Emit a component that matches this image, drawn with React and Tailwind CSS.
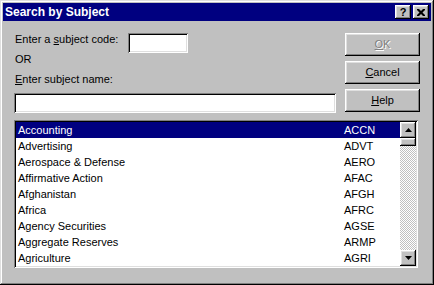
import React from 'react';

const subjects = [
    { name: 'Accounting', code: 'ACCN' },
    { name: 'Advertising', code: 'ADVT' },
    { name: 'Aerospace & Defense', code: 'AERO' },
    { name: 'Affirmative Action', code: 'AFAC' },
    { name: 'Afghanistan', code: 'AFGH' },
    { name: 'Africa', code: 'AFRC' },
    { name: 'Agency Securities', code: 'AGSE' },
    { name: 'Aggregate Reserves', code: 'ARMP' },
    { name: 'Agriculture', code: 'AGRI' },
];

const raised = 'shadow-[inset_-1px_-1px_#000,inset_1px_1px_#fff,inset_-2px_-2px_#808080,inset_2px_2px_#dfdfdf]';
const sunken = 'shadow-[inset_1px_1px_#808080,inset_-1px_-1px_#fff,inset_2px_2px_#000,inset_-2px_-2px_#dfdfdf]';

function Arrow({ down }) {
    return (
        <svg width="7" height="4" viewBox="0 0 7 4">
            {down
                ? <polygon points="0,0 7,0 3.5,4" fill="#000" />
                : <polygon points="3.5,0 7,4 0,4" fill="#000" />}
        </svg>
    );
}

function Button({ children, disabled }) {
    return (
        <div className={`h-[23px] w-[75px] bg-[#c0c0c0] ${raised} flex items-center justify-center text-[11px] leading-[13px] ${disabled ? 'text-[#808080] [text-shadow:1px_1px_0_#fff]' : 'text-black'}`}>
            {children}
        </div>
    );
}

export default function App() {
    return (
        <div className="w-[434px] h-[285px] bg-[#c0c0c0] p-[3px] shadow-[inset_-1px_-1px_#000,inset_1px_1px_#dfdfdf,inset_-2px_-2px_#808080,inset_2px_2px_#fff] font-['Liberation_Sans',Arial,sans-serif] select-none">
            {/* title bar */}
            <div className="h-[18px] bg-[#000080] flex items-center justify-between pl-[2px] pr-[2px]">
                <span className="text-white font-bold text-[12px] leading-[18px]">Search by Subject</span>
                <div className="flex gap-[2px]">
                    <div className={`w-[16px] h-[14px] bg-[#c0c0c0] ${raised} flex items-center justify-center text-[11px] font-bold leading-none text-black`}>?</div>
                    <div className={`w-[16px] h-[14px] bg-[#c0c0c0] ${raised} flex items-center justify-center`}>
                        <svg width="8" height="7" viewBox="0 0 8 7">
                            <path d="M0 0h2l2 2 2-2h2v1l-2.5 2.5L8 6v1H6L4 5 2 7H0V6l2.5-2.5L0 1z" fill="#000" />
                        </svg>
                    </div>
                </div>
            </div>

            <div className="pl-[11px] pt-[12px] text-[11px] leading-[13px] text-black">
                <div className="flex">
                    <div className="w-[322px]">
                        <div className="flex items-start h-[20px]">
                            <span className="w-[114px] pl-px">Enter a <span className="underline">s</span>ubject code:</span>
                            <div className={`w-[60px] h-[20px] bg-white ${sunken}`}></div>
                        </div>
                        <div className="pl-px">OR</div>
                        <div className="pl-px mt-[7px]"><span className="underline">E</span>nter subject name:</div>
                        <div className={`mt-[7px] h-[20px] bg-white ${sunken}`}></div>
                    </div>
                    <div className="ml-[9px] flex flex-col gap-[5px]">
                        <Button disabled><span className="underline">O</span>K</Button>
                        <Button><span className="underline">C</span>ancel</Button>
                        <Button><span className="underline">H</span>elp</Button>
                    </div>
                </div>

                {/* list box */}
                <div className={`mt-[7px] w-[404px] h-[148px] bg-white ${sunken} p-[2px] flex`}>
                    <div className="flex-1">
                        {subjects.map((s, i) => (
                            <div key={s.code} className={`h-[16px] leading-[16px] pl-[2px] flex ${i === 0 ? 'bg-[#000080] text-white' : 'text-black'}`}>
                                <span className="w-[326px]">{s.name}</span>
                                <span>{s.code}</span>
                            </div>
                        ))}
                    </div>
                    <div className="w-[16px] flex flex-col bg-[image:repeating-conic-gradient(#fff_0%_25%,#c0c0c0_0%_50%)] bg-[length:2px_2px]">
                        <div className={`h-[16px] bg-[#c0c0c0] ${raised} flex items-center justify-center`}><Arrow /></div>
                        <div className={`h-[8px] bg-[#c0c0c0] ${raised}`}></div>
                        <div className="flex-1"></div>
                        <div className={`h-[16px] bg-[#c0c0c0] ${raised} flex items-center justify-center`}><Arrow down /></div>
                    </div>
                </div>
            </div>
        </div>
    );
}
